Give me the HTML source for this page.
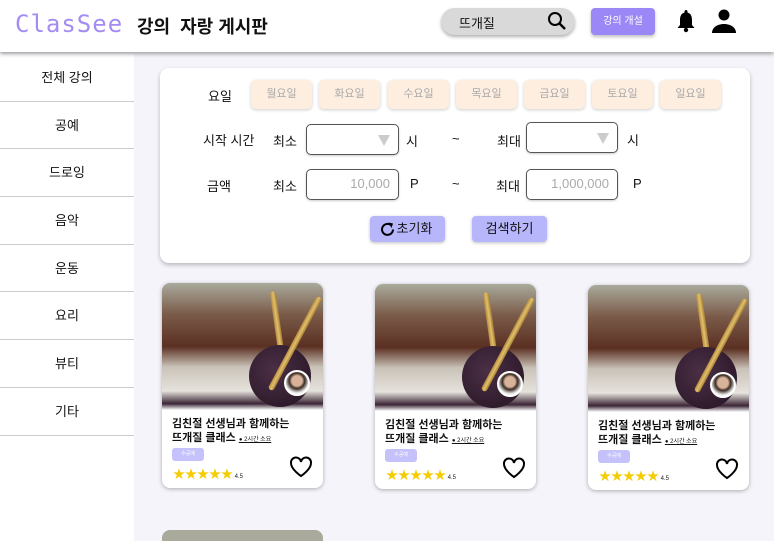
<!DOCTYPE html>
<html><head><meta charset="utf-8"><style>
*{margin:0;padding:0;box-sizing:border-box}
html{width:774px;height:541px;overflow:hidden}
body{width:774px;height:541px;overflow:hidden;background:#f4f4fa;font-family:"Liberation Sans","Noto Sans CJK KR",sans-serif;position:relative;color:#111}
.hdr{position:absolute;left:0;top:0;width:774px;height:52px;background:#fff;box-shadow:0 2px 4px rgba(0,0,0,.35);z-index:5}
.logo{position:absolute;left:15px;top:10px;font-family:"DejaVu Sans Mono",monospace;font-size:24px;color:#a48cf4;letter-spacing:1px}
.nav{position:absolute;left:137px;top:13px;font-size:18px;font-weight:bold}
.search{position:absolute;left:441px;top:8px;width:134px;height:27px;background:#d9d9d9;border-radius:14px;box-shadow:0 2px 3px rgba(0,0,0,.3);font-size:13px;padding:5px 0 0 18px}
.open{position:absolute;left:591px;top:8px;width:64px;height:27px;background:#9b87f5;border-radius:4px;color:#fff;font-size:10px;text-align:center;line-height:27px;box-shadow:0 2px 3px rgba(0,0,0,.25)}
.side{position:absolute;left:0;top:54px;width:134px;height:487px;background:#fff;overflow:hidden}
.side div{height:47.7px;border-bottom:1px solid #ccc;text-align:center;font-size:13px;line-height:48px}
.filter{position:absolute;left:160px;top:68px;width:590px;height:195px;background:#fff;border-radius:9px;box-shadow:0 2px 4px rgba(0,0,0,.25)}
.t{position:absolute;font-size:13px}
.day{position:absolute;top:12px;width:61px;height:29px;background:#fdeee0;border-radius:5px;box-shadow:0 1px 3px rgba(0,0,0,.2);font-size:11px;color:#aaa;text-align:center;line-height:29px}
.box{position:absolute;width:93px;height:31px;border:1px solid #555;border-radius:5px;font-size:13px;color:#aaa;text-align:right;padding:6px 8px 0 0;box-shadow:0 1px 2px rgba(0,0,0,.2)}
.tri{position:absolute;right:8px;top:10px;width:0;height:0;border-left:6px solid transparent;border-right:6px solid transparent;border-top:11px solid #ccc}
.btn{position:absolute;top:148px;height:26px;background:#b8b6fb;border-radius:4px;font-size:13px;text-align:center;line-height:26px;box-shadow:0 1px 3px rgba(0,0,0,.25)}
.card{position:absolute;width:161px;height:205px;background:#fff;border-radius:8px;box-shadow:0 1px 4px rgba(0,0,0,.3);overflow:hidden}
.img{position:absolute;left:0;top:0;width:161px;height:127px;background:linear-gradient(180deg,#a9aa9c 0%,#7a5a48 25%,#5a3022 50%,#c9c2b8 66%,#e6e2dc 85%,#3b2535 95%,#fff 100%)}
.ball{position:absolute;left:87px;top:62px;width:62px;height:62px;border-radius:50%;background:radial-gradient(circle at 40% 40%,#4b2f45,#231322)}
.stick{position:absolute;width:6px;height:105px;background:linear-gradient(90deg,#b48a3a,#e0c070,#a67c2f);border-radius:3px}
.av{position:absolute;left:122px;top:87px;width:26px;height:26px;border-radius:50%;background:radial-gradient(circle at 50% 40%,#d9b29a 30%,#3a2a22 45%,#eee 70%);border:2px solid #fff}
.ti{position:absolute;left:10px;top:134px;font-size:11px;font-weight:bold;line-height:14px}
.ti small{font-size:6px;font-weight:normal;text-decoration:underline}
.tag{position:absolute;left:10px;top:165px;width:32px;height:13px;background:#c4c1fb;border-radius:3px;font-size:5px;color:#fff;text-align:center;line-height:13px}
.stars{position:absolute;left:11px;top:182px;font-size:12px;color:#f5cc00}
.stars span{font-size:6px;color:#222}
.heart{position:absolute;left:127px;top:173px}
</style></head><body>
<div class="hdr">
<div class="logo">ClasSee</div>
<div class="nav">강의&nbsp; 자랑 게시판</div>
<div class="search">뜨개질
<svg style="position:absolute;left:106px;top:3px" width="20" height="20" viewBox="0 0 20 20"><circle cx="8" cy="8" r="6" fill="none" stroke="#000" stroke-width="2"/><path d="M12.5 12.5L18 18" stroke="#000" stroke-width="2.5"/></svg></div>
<div class="open">강의 개설</div>
<svg style="position:absolute;left:676px;top:9px" width="20" height="24" viewBox="0 0 20 24"><path d="M10 1c1 0 1.5.7 1.5 1.5v1C15 4.5 16 7.5 16 11v5l2.5 3H1.5L4 16v-5c0-3.5 1-6.5 4.5-7.5v-1C8.5 1.7 9 1 10 1z" fill="#000"/><circle cx="10" cy="21" r="2.2" fill="#000"/></svg>
<svg style="position:absolute;left:711px;top:9px" width="26" height="24" viewBox="0 0 26 24"><circle cx="13" cy="6" r="5.5" fill="#000"/><path d="M1 24c0-6 6-9 12-9s12 3 12 9z" fill="#000"/></svg>
</div>
<div class="side"><div>전체 강의</div><div>공예</div><div>드로잉</div><div>음악</div><div>운동</div><div>요리</div><div>뷰티</div><div>기타</div></div>
<div class="filter">
<div class="t" style="left:48px;top:18px">요일</div>
<div class="day" style="left:91px">월요일</div><div class="day" style="left:159px">화요일</div><div class="day" style="left:228px">수요일</div><div class="day" style="left:296px">목요일</div><div class="day" style="left:364px">금요일</div><div class="day" style="left:432px">토요일</div><div class="day" style="left:500px">일요일</div>
<div class="t" style="left:43px;top:62px">시작 시간</div>
<div class="t" style="left:113px;top:63px">최소</div>
<div class="box" style="left:146px;top:56px;height:31px"><div class="tri"></div></div>
<div class="t" style="left:246px;top:63px">시</div>
<div class="t" style="left:292px;top:63px">~</div>
<div class="t" style="left:337px;top:63px">최대</div>
<div class="box" style="left:366px;top:54px;height:31px;width:92px"><div class="tri"></div></div>
<div class="t" style="left:467px;top:62px">시</div>
<div class="t" style="left:47px;top:108px">금액</div>
<div class="t" style="left:113px;top:108px">최소</div>
<div class="box" style="left:146px;top:101px">10,000</div>
<div class="t" style="left:250px;top:108px">P</div>
<div class="t" style="left:292px;top:108px">~</div>
<div class="t" style="left:336px;top:108px">최대</div>
<div class="box" style="left:366px;top:101px;width:92px">1,000,000</div>
<div class="t" style="left:473px;top:108px">P</div>
<div class="btn" style="left:210px;width:75px;padding-left:14px"><svg style="position:absolute;left:9px;top:5px" width="17" height="17" viewBox="0 0 17 17"><path d="M14 8.5A5.5 5.5 0 1 1 11.5 3.8" fill="none" stroke="#000" stroke-width="2"/><path d="M9.5 1.5L14 2.5 12.5 7z" fill="#000"/></svg>초기화</div>
<div class="btn" style="left:312px;width:75px">검색하기</div>
</div>
<div class="card" style="left:162px;top:283px"><div class="img"></div><div class="stick" style="left:115px;top:8px;transform:rotate(-8deg)"></div><div class="ball"></div><div class="stick" style="left:130px;top:8px;transform:rotate(28deg)"></div><div class="av"></div>
<div class="ti">김친절 선생님과 함께하는<br>뜨개질 클래스 <small>● 2시간 소요</small></div><div class="tag">수공예</div><div class="stars">★★★★★<span> 4.5</span></div>
<svg class="heart" width="24" height="22" viewBox="0 0 24 22"><path d="M12 20S2 13.5 2 7a5 5 0 0 1 10-1 5 5 0 0 1 10 1c0 6.5-10 13-10 13z" fill="none" stroke="#000" stroke-width="2"/></svg></div>
<div class="card" style="left:375px;top:284px"><div class="img"></div><div class="stick" style="left:115px;top:8px;transform:rotate(-8deg)"></div><div class="ball"></div><div class="stick" style="left:130px;top:8px;transform:rotate(28deg)"></div><div class="av"></div>
<div class="ti">김친절 선생님과 함께하는<br>뜨개질 클래스 <small>● 2시간 소요</small></div><div class="tag">수공예</div><div class="stars">★★★★★<span> 4.5</span></div>
<svg class="heart" width="24" height="22" viewBox="0 0 24 22"><path d="M12 20S2 13.5 2 7a5 5 0 0 1 10-1 5 5 0 0 1 10 1c0 6.5-10 13-10 13z" fill="none" stroke="#000" stroke-width="2"/></svg></div>
<div class="card" style="left:588px;top:285px"><div class="img"></div><div class="stick" style="left:115px;top:8px;transform:rotate(-8deg)"></div><div class="ball"></div><div class="stick" style="left:130px;top:8px;transform:rotate(28deg)"></div><div class="av"></div>
<div class="ti">김친절 선생님과 함께하는<br>뜨개질 클래스 <small>● 2시간 소요</small></div><div class="tag">수공예</div><div class="stars">★★★★★<span> 4.5</span></div>
<svg class="heart" width="24" height="22" viewBox="0 0 24 22"><path d="M12 20S2 13.5 2 7a5 5 0 0 1 10-1 5 5 0 0 1 10 1c0 6.5-10 13-10 13z" fill="none" stroke="#000" stroke-width="2"/></svg></div>
<div style="position:absolute;left:162px;top:530px;width:161px;height:11px;border-radius:8px 8px 0 0;background:#a9aa9c"></div>
</body></html>
